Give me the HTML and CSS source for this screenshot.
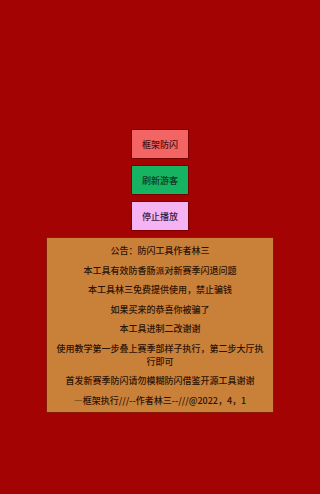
FILE: index.html
```html
<!DOCTYPE html>
<html lang="zh">
<head>
<meta charset="utf-8">
<link rel="stylesheet" href="styles.css">
</head>
<body>
<main class="page">
  <div class="buttons">
    <div class="btn btn-red">框架防闪</div>
    <div class="btn btn-green">刷新游客</div>
    <div class="btn btn-pink">停止播放</div>
  </div>
  <section class="notice">
    <p>公告：防闪工具作者林三</p>
    <p>本工具有效防香肠派对新赛季闪退问题</p>
    <p>本工具林三免费提供使用，禁止骗钱</p>
    <p>如果买来的恭喜你被骗了</p>
    <p>本工具进制二改谢谢</p>
    <p>使用教学第一步叠上赛季部样子执行，第二步大厅执行即可</p>
    <p>首发新赛季防闪请勿模糊防闪借鉴开源工具谢谢</p>
    <p>—框架执行///--作者林三--///@2022，4，1</p>
  </section>
</main>
</body>
</html>
```

FILE: styles.css
```css
html, body {
  margin: 0;
  padding: 0;
}
body {
  background: #a30303;
  width: 314px;
  height: 494px;
  overflow: hidden;
  font-family: "Noto Sans CJK SC", "Noto Sans", sans-serif;
}
.page {
  display: flex;
  flex-direction: column;
  align-items: center;
  padding-top: 129px;
  padding-left: 6px;
}
.buttons {
  display: flex;
  flex-direction: column;
  align-items: center;
  gap: 6px;
}
.btn {
  width: 56px;
  height: 28px;
  border: 1px solid #7a0000;
  display: flex;
  align-items: center;
  justify-content: center;
  font-size: 9px;
  font-weight: 500;
  color: #4a1010;
}
.btn-red { background: #f36464; }
.btn-green { background: #16b462; color: #0f3a22; }
.btn-pink { background: #f6b3f4; color: #3a1838; }
.notice {
  margin-top: 6px;
  width: 228px;
  box-sizing: border-box;
  background: #c98039;
  border: 1px solid #8a1a08;
  padding: 6px 6px 5px;
  display: flex;
  flex-direction: column;
  gap: 6.5px;
}
.notice p {
  margin: 0;
  font-size: 9px;
  font-weight: 500;
  line-height: 13px;
  text-align: center;
  color: #2c1306;
}
```
